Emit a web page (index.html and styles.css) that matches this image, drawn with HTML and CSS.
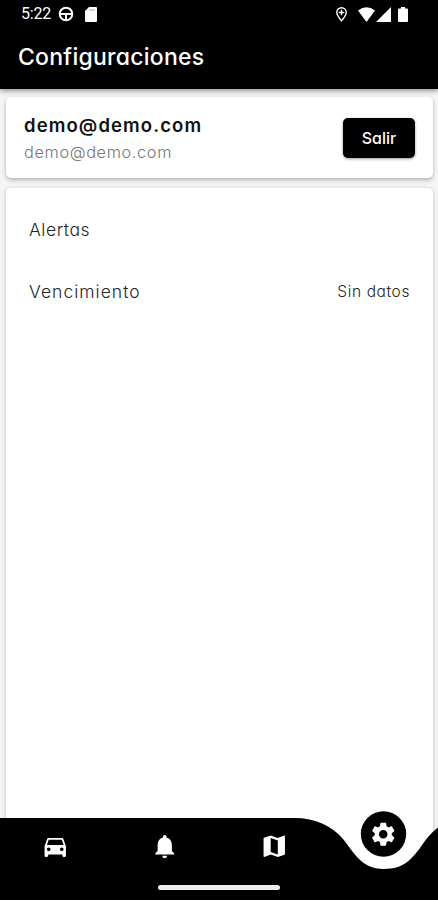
FILE: index.html
```html
<!DOCTYPE html>
<html lang="es">
<head>
<meta charset="utf-8">
<meta name="viewport" content="width=device-width">
<title>Configuraciones</title>
<link rel="stylesheet" href="styles.css">
</head>
<body>
<div class="screen">
  <header class="top">
    <div class="status">
      <span class="clock">5:22</span>
      <svg class="wheel" width="16" height="16" viewBox="0 0 16 16" fill="none" stroke="#fff"><circle cx="8" cy="8" r="6.300" stroke-width="2"/><path d="M2 8h12M8 8v6" stroke-width="1.900"/></svg>
      <svg class="sd" width="12" height="15" viewBox="0 0 12 15"><path fill="#fff" d="M4 0h7q1 0 1 1v13q0 1-1 1H1q-1 0-1-1V4z"/><path stroke="#999" stroke-width=".9" d="M4 3h6"/></svg>
      <span class="spacer"></span>
      <svg class="pin" width="11" height="15" viewBox="0 0 11 15"><path fill="none" stroke="#fff" stroke-width="1.4" d="M5.5 13.8C2.5 10.2.8 7.8.8 5.4a4.7 4.7 0 0 1 9.4 0c0 2.4-1.7 4.8-4.7 8.4z"/><path fill="none" stroke="#fff" stroke-width="1.4" d="M5.5 2.8v5.4M2.8 5.5h5.4"/></svg>
      <svg class="wifi" width="17" height="15" viewBox="0 0 18 15" preserveAspectRatio="none"><path fill="#fff" d="M0 3.5Q9-3 18 3.5L9 15z"/></svg>
      <svg class="signal" width="15" height="15" viewBox="0 0 15 15"><path fill="#fff" d="M15 0v15H0z"/></svg>
      <svg class="battery" width="10" height="15" viewBox="0 0 10 15"><path fill="#fff" d="M3 0h4v1.6h2q1 0 1 1V14q0 1-1 1H1q-1 0-1-1V2.600q0-1 1-1h2z"/></svg>
    </div>
    <h1 class="title">Configuraciones</h1>
  </header>
  <main class="content">
    <section class="card account">
      <div class="user">
        <div class="name">demo@demo.com</div>
        <div class="mail">demo@demo.com</div>
      </div>
      <button class="logout">Salir</button>
    </section>
    <section class="card settings">
      <div class="row"><span class="alerts">Alertas</span></div>
      <div class="row"><span class="expiry">Vencimiento</span><span class="value">Sin datos</span></div>
    </section>
  </main>
  <nav class="nav">
    <svg class="nav-shape" width="438" height="90" viewBox="0 0 438 90"><path d="M0 8H294C316 8 332 16 343 29C353 41 361 59 383.500 59C405 59 412 48 420 38Q429 24 438 17.500V90H0z"/><circle cx="383.500" cy="24" r="22.700"/></svg>
    <div class="tabs">
      <svg class="tab" viewBox="0 0 24 24"><path d="M18.920 6.010C18.720 5.420 18.160 5 17.500 5h-11c-.66 0-1.210.42-1.420 1.010L3 12v8c0 .55.45 1 1 1h1c.55 0 1-.45 1-1v-1h12v1c0 .55.45 1 1 1h1c.55 0 1-.45 1-1v-8l-2.080-5.990zM6.500 16c-.83 0-1.500-.67-1.500-1.500S5.670 13 6.500 13s1.500.67 1.500 1.500S7.330 16 6.500 16zm11 0c-.83 0-1.500-.67-1.500-1.500s.67-1.500 1.500-1.500 1.500.67 1.500 1.500-.67 1.500-1.500 1.500zM5 11l1.500-4.500h11L19 11H5z"/></svg>
      <svg class="tab bell" viewBox="0 0 24 24"><path d="M12 22c1.100 0 2-.9 2-2h-4c0 1.100.89 2 2 2zm6-6v-5c0-3.070-1.640-5.640-4.500-6.320V4c0-.83-.67-1.500-1.500-1.500s-1.500.67-1.500 1.500v.68C7.630 5.360 6 7.920 6 11v5l-2 2v1h16v-1l-2-2z"/></svg>
      <svg class="tab" viewBox="0 0 24 24"><path d="M20.500 3l-.16.03L15 5.100 9 3 3.360 4.900c-.21.07-.36.25-.36.48V20.500c0 .28.22.5.5.5l.16-.03L9 18.900l6 2.100 5.640-1.900c.21-.07.36-.25.36-.48V3.500c0-.28-.22-.5-.5-.5zM15 19l-6-2.110V5l6 2.110V19z"/></svg>
      <svg class="tab active" viewBox="0 0 24 24"><path d="M19.140 12.940c.04-.3.06-.61.06-.94 0-.32-.02-.64-.07-.94l2.030-1.580c.18-.14.23-.41.12-.61l-1.920-3.320c-.12-.22-.37-.29-.59-.22l-2.390.96c-.5-.38-1.030-.7-1.620-.94l-.36-2.540c-.04-.24-.24-.41-.48-.41h-3.840c-.24 0-.43.17-.47.41l-.36 2.540c-.59.24-1.130.57-1.620.94l-2.390-.96c-.22-.08-.47 0-.59.22L2.740 8.870c-.12.21-.08.47.12.61l2.030 1.580c-.05.3-.09.63-.09.94s.02.64.07.94l-2.030 1.580c-.18.14-.23.41-.12.61l1.920 3.320c.12.22.37.29.59.22l2.390-.96c.5.38 1.030.7 1.620.94l.36 2.540c.05.24.24.41.48.41h3.840c.24 0 .44-.17.47-.41l.36-2.540c.59-.24 1.130-.56 1.620-.94l2.390.96c.22.08.47 0 .59-.22l1.920-3.320c.12-.22.07-.47-.12-.61l-2.010-1.580zM12 15.600c-1.980 0-3.600-1.620-3.600-3.600s1.620-3.600 3.600-3.600 3.600 1.620 3.600 3.600-1.620 3.600-3.600 3.600z"/></svg>
    </div>
    <div class="home"></div>
  </nav>
</div>
</body>
</html>
```
FILE: styles.css
```css
* { box-sizing: border-box; }
body { margin: 0; background: #f5f5f5; font-family: Inter, "Open Sans", sans-serif; font-feature-settings: "cv11"; }
.screen { position: relative; height: 900px; display: flex; flex-direction: column; overflow: hidden; }
.top { position: relative; z-index: 2; height: 89px; flex: none; background: #000; color: #fff; box-shadow: 0 2px 5px rgba(0,0,0,.4); }
.status { display: flex; align-items: center; height: 28px; padding: 0 30px 0 21px; }
.clock { width: 37px; font: 400 16px/30px Roboto, sans-serif; letter-spacing: -.2px; }
.sd { margin-left: 11px; }
.spacer { flex: 1; }
.wifi { margin-left: 11px; }
.signal { margin-left: 1px; }
.battery { margin-left: 7px; }
.title { margin: 14px 0 0 18px; font-size: 23px; line-height: 30px; font-weight: 500; letter-spacing: .25px; }
.content { flex: 1; display: flex; flex-direction: column; gap: 10px; padding: 8px 5px 0 6px; }
.card { background: #fff; border-radius: 5px; box-shadow: 0 2px 4px rgba(0,0,0,.28); }
.account { height: 81px; display: flex; align-items: center; justify-content: space-between; padding: 0 18px; }
.user { display: flex; flex-direction: column; gap: 3px; padding-top: 2px; white-space: nowrap; }
.name { font-size: 18.5px; line-height: 24px; font-weight: 600; letter-spacing: 1.1px; color: #111; }
.mail { font-size: 16.3px; line-height: 24px; font-weight: 300; letter-spacing: .65px; color: #777; }
.logout { width: 72px; height: 40px; margin-top: 1px; padding: 0; border: 0; border-radius: 5px; background: #000; color: #fff; font: 500 16px Inter, sans-serif; font-feature-settings: "cv11"; box-shadow: 0 1px 3px rgba(0,0,0,.4); }
.settings { flex: 1; padding: 10px 23px 0; box-shadow: 0 1px 4px rgba(0,0,0,.22); }
.row { display: flex; align-items: center; justify-content: space-between; height: 62px; color: #252525; font-size: 17.5px; font-weight: 300; }
.alerts { letter-spacing: .55px; }
.expiry { letter-spacing: 1.02px; }
.value { font-size: 15.5px; letter-spacing: .6px; padding-top: 1px; }
.nav { position: absolute; left: 0; right: 0; bottom: 0; height: 90px; }
.nav-shape { display: block; position: absolute; top: 0; left: 0; }
.tabs { position: relative; display: grid; grid-template-columns: repeat(4, 109.5px); justify-items: center; padding-top: 22px; }
.tab { width: 28.5px; height: 28.5px; fill: #fff; }
.tab.bell { transform: translateX(.5px); }
.tab.active { transform: translateY(-12px); }
.home { position: relative; width: 122px; height: 5px; margin: 24px auto 0; border-radius: 3px; background: #eee; }
```
